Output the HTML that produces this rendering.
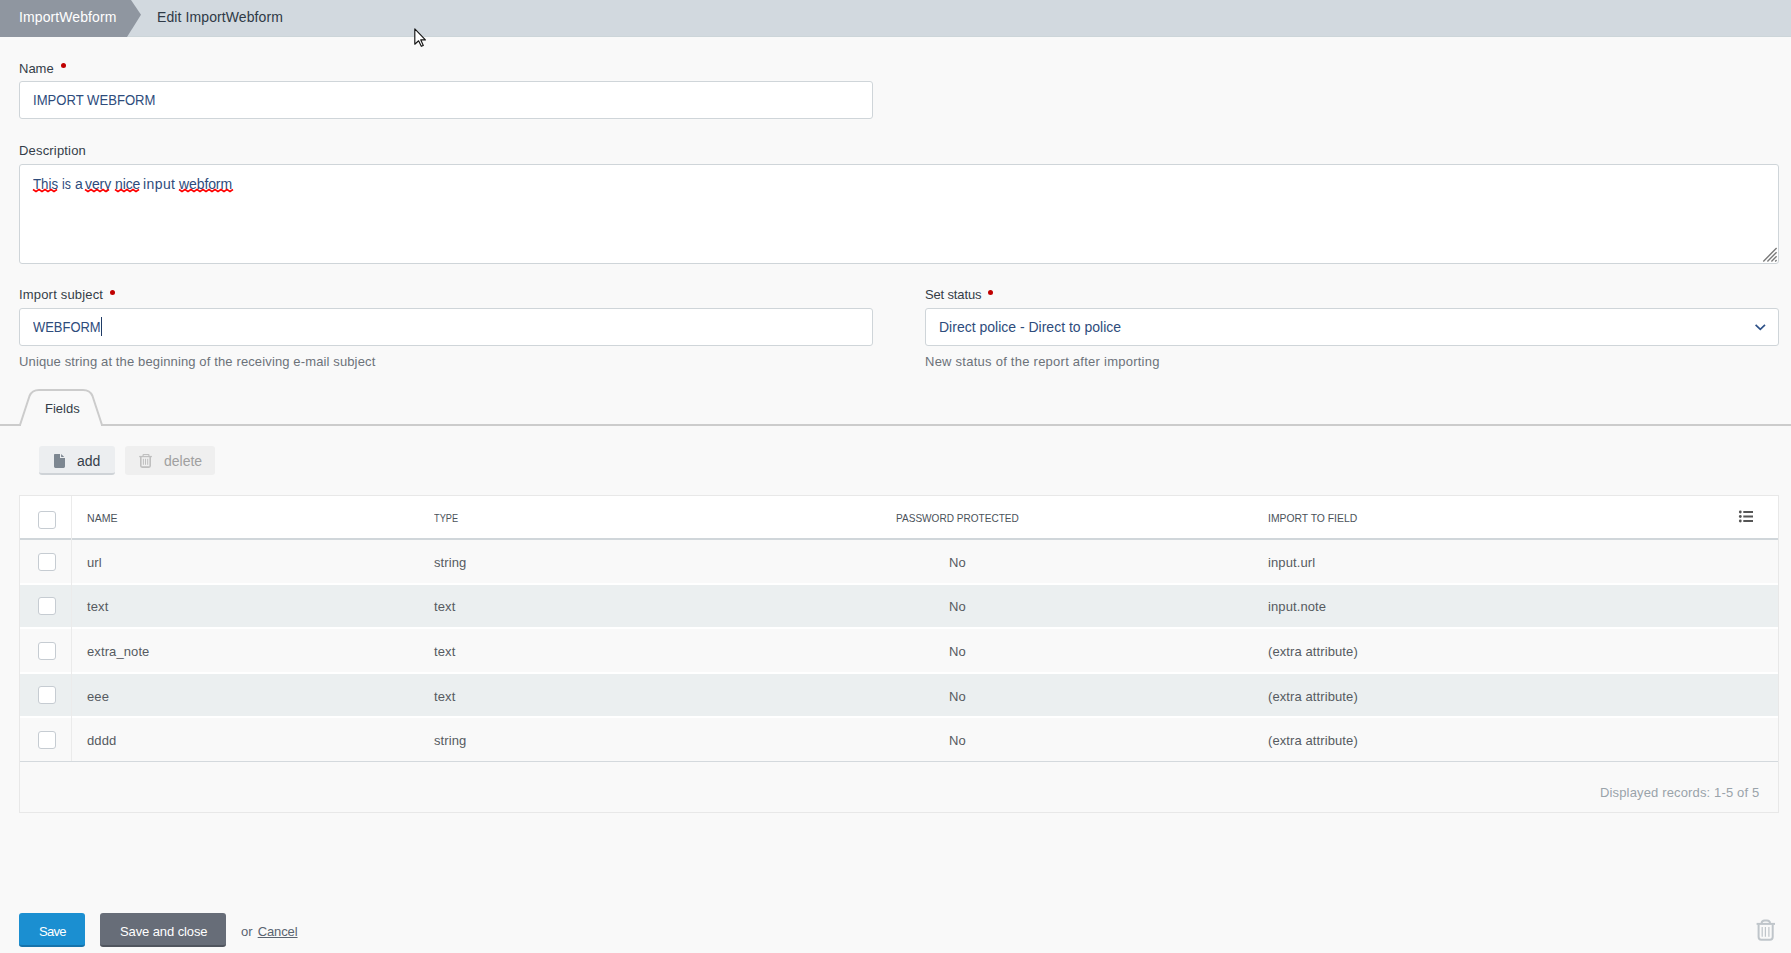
<!DOCTYPE html>
<html><head><meta charset="utf-8">
<style>
*{box-sizing:border-box;margin:0;padding:0}
html,body{width:1791px;height:953px;overflow:hidden;background:#f9f9f9;font-family:"Liberation Sans",sans-serif;}
.a{position:absolute;white-space:nowrap}
.t14{font-size:14px;line-height:16px}
.t13{font-size:13px;line-height:16px}
.t11{font-size:11px;line-height:14px}
.lbl{color:#343d48}
.dot{position:absolute;width:5px;height:5px;border-radius:50%;background:#c00000}
.inp{position:absolute;background:#fff;border:1px solid #cfd5d9;border-radius:3px}
.itxt{color:#2e4c7c}
.help{color:#6c7279}
.cb{position:absolute;width:18px;height:18px;background:#fff;border:1px solid #c6ccd2;border-radius:3px}
.cell{color:#565b61;letter-spacing:0.1px}
.hdr{color:#4b525a;text-transform:uppercase}
</style></head><body>

<!-- breadcrumb -->
<div class="a" style="left:0;top:0;width:1791px;height:37px;background:#d2d9df;border-bottom:1px solid #ccd5d9"></div>
<svg class="a" style="left:0;top:0" width="150" height="37"><polygon points="0,0 131,0 141,14.7 127,37 0,37" fill="#8f96a0"/></svg>
<div class="a t14" style="left:19px;top:9px;color:#fff;letter-spacing:0.1px">ImportWebform</div>
<div class="a t14" style="left:157px;top:9px;color:#2f3a46;letter-spacing:0.1px">Edit ImportWebform</div>

<!-- Name -->
<div class="a t13 lbl" style="left:19px;top:61px">Name</div>
<div class="dot" style="left:61px;top:63px"></div>
<div class="inp" style="left:19px;top:81px;width:854px;height:38px"></div>
<div class="a t14 itxt" style="left:33px;top:92px;transform:scaleX(0.935);transform-origin:0 0">IMPORT WEBFORM</div>

<!-- Description -->
<div class="a t13 lbl" style="left:19px;top:143px;letter-spacing:0.18px">Description</div>
<div class="inp" style="left:19px;top:164px;width:1760px;height:100px"></div>
<div class="a t14 itxt" style="left:33px;top:176px;transform:scaleX(0.95);transform-origin:0 0">This</div><div class="a t14 itxt" style="left:62px;top:176px;transform:scaleX(0.88);transform-origin:0 0">is</div><div class="a t14 itxt" style="left:75px;top:176px">a</div><div class="a t14 itxt" style="left:85px;top:176px;letter-spacing:-0.1px">very</div><div class="a t14 itxt" style="left:115px;top:176px;letter-spacing:-0.1px">nice</div><div class="a t14 itxt" style="left:143px;top:176px;letter-spacing:0.4px">input</div><div class="a t14 itxt" style="left:179px;top:176px;letter-spacing:-0.1px">webform</div>

<!-- Import subject -->
<div class="a t13 lbl" style="left:19px;top:287px;letter-spacing:0.18px">Import subject</div>
<div class="dot" style="left:110px;top:290px"></div>
<div class="inp" style="left:19px;top:308px;width:854px;height:38px"></div>
<div class="a t14 itxt" style="left:33px;top:319px;transform:scaleX(0.925);transform-origin:0 0">WEBFORM</div>
<div class="a t13 help" style="left:19px;top:354px;letter-spacing:0.13px">Unique string at the beginning of the receiving e-mail subject</div>

<!-- Set status -->
<div class="a t13 lbl" style="left:925px;top:287px;letter-spacing:-0.15px">Set status</div>
<div class="dot" style="left:988px;top:290px"></div>
<div class="inp" style="left:925px;top:308px;width:854px;height:38px"></div>
<div class="a t14 itxt" style="left:939px;top:319px">Direct police - Direct to police</div>
<div class="a t13 help" style="left:925px;top:354px;letter-spacing:0.25px">New status of the report after importing</div>

<!-- Tab -->
<div class="a" style="left:0;top:424px;width:21px;height:2px;background:#cccccc"></div><div class="a" style="left:101px;top:424px;width:1690px;height:2px;background:#cccccc"></div>
<svg class="a" style="left:15px;top:385px" width="95" height="42"><path d="M5,40 L14.5,11 Q17,5 24,5 L68,5 Q75,5 77.5,11 L87,40" fill="#f9f9f9" stroke="#cccccc" stroke-width="2"/></svg>
<div class="a t13 lbl" style="left:45px;top:401px">Fields</div>

<!-- Buttons add / delete -->
<div class="a" style="left:39px;top:446px;width:76px;height:29px;background:#eceef0;border-radius:3px;border-bottom:2px solid #cfd3d7"></div>
<svg class="a" style="left:54px;top:454px" width="12" height="14"><path d="M0.8,0 H6 V3.9 H11 V12.6 Q11,14 9.6,14 H1.4 Q0,14 0,12.6 V0.8 Q0,0 0.8,0 Z" fill="#7d8791"/><path d="M7.1,0 L10.2,2.9 L7.1,2.9 Z" fill="#7d8791"/></svg>
<div class="a t14" style="left:77px;top:453px;color:#36404a">add</div>
<div class="a" style="left:125px;top:446px;width:90px;height:29px;background:#efefef;border-radius:3px"></div>
<div class="a t14" style="left:164px;top:453px;color:#a0a0a0">delete</div>

<!-- Table -->
<div class="a" style="left:19px;top:495px;width:1760px;height:318px;border:1px solid #e8e8e8;background:#f9f9f9"></div>
<div class="a" style="left:20px;top:496px;width:1758px;height:42px;background:#fff"></div>
<div class="a" style="left:20px;top:538px;width:1758px;height:2px;background:#d0d6da"></div>
<div class="a" style="left:20px;top:585px;width:1758px;height:42px;background:#ebeff0"></div>
<div class="a" style="left:20px;top:674px;width:1758px;height:42px;background:#ebeff0"></div>
<div class="a" style="left:20px;top:583px;width:1758px;height:2px;background:#fff"></div>
<div class="a" style="left:20px;top:627px;width:1758px;height:2px;background:#fff"></div>
<div class="a" style="left:20px;top:672px;width:1758px;height:2px;background:#fff"></div>
<div class="a" style="left:20px;top:716px;width:1758px;height:2px;background:#fff"></div>
<div class="a" style="left:20px;top:761px;width:1758px;height:1px;background:#d4d9dd"></div>
<div class="a" style="left:71px;top:496px;width:1px;height:265px;background:#ebebeb"></div>

<div class="cb" style="left:38px;top:511px"></div>
<div class="a t11 hdr" style="left:87px;top:511px;transform:scaleX(0.96);transform-origin:0 0">Name</div>
<div class="a t11 hdr" style="left:434px;top:511px;transform:scaleX(0.84);transform-origin:0 0">Type</div>
<div class="a t11 hdr" style="left:896px;top:511px;transform:scaleX(0.915);transform-origin:0 0">Password protected</div>
<div class="a t11 hdr" style="left:1268px;top:511px;transform:scaleX(0.943);transform-origin:0 0">Import to field</div>

<div class="cb" style="left:38px;top:553px"></div>
<div class="cb" style="left:38px;top:597px"></div>
<div class="cb" style="left:38px;top:642px"></div>
<div class="cb" style="left:38px;top:686px"></div>
<div class="cb" style="left:38px;top:731px"></div>

<div class="a t13 cell" style="left:87px;top:555px">url</div>
<div class="a t13 cell" style="left:434px;top:555px">string</div>
<div class="a t13 cell" style="left:949px;top:555px">No</div>
<div class="a t13 cell" style="left:1268px;top:555px">input.url</div>

<div class="a t13 cell" style="left:87px;top:599px">text</div>
<div class="a t13 cell" style="left:434px;top:599px">text</div>
<div class="a t13 cell" style="left:949px;top:599px">No</div>
<div class="a t13 cell" style="left:1268px;top:599px">input.note</div>

<div class="a t13 cell" style="left:87px;top:644px">extra_note</div>
<div class="a t13 cell" style="left:434px;top:644px">text</div>
<div class="a t13 cell" style="left:949px;top:644px">No</div>
<div class="a t13 cell" style="left:1268px;top:644px">(extra attribute)</div>

<div class="a t13 cell" style="left:87px;top:689px">eee</div>
<div class="a t13 cell" style="left:434px;top:689px">text</div>
<div class="a t13 cell" style="left:949px;top:689px">No</div>
<div class="a t13 cell" style="left:1268px;top:689px">(extra attribute)</div>

<div class="a t13 cell" style="left:87px;top:733px">dddd</div>
<div class="a t13 cell" style="left:434px;top:733px">string</div>
<div class="a t13 cell" style="left:949px;top:733px">No</div>
<div class="a t13 cell" style="left:1268px;top:733px">(extra attribute)</div>

<div class="a t13" style="left:1600px;top:785px;color:#9aa3aa;letter-spacing:0.15px">Displayed records: 1-5 of 5</div>

<!-- bottom buttons -->
<div class="a" style="left:19px;top:913px;width:66px;height:34px;background:#1b8fd1;border-radius:3px;border-bottom:2px solid #1673ab"></div>
<div class="a t13" style="left:39px;top:924px;color:#fff;letter-spacing:-0.75px">Save</div>
<div class="a" style="left:100px;top:913px;width:126px;height:34px;background:#676d78;border-radius:3px;border-bottom:2px solid #50555e"></div>
<div class="a t13" style="left:120px;top:924px;color:#fff;letter-spacing:-0.1px">Save and close</div>
<div class="a t13" style="left:241px;top:924px;color:#5a6470">or <span style="text-decoration:underline;margin-left:1.5px;letter-spacing:-0.1px">Cancel</span></div>


<!-- textarea resize handle -->
<svg class="a" style="left:1760px;top:246px" width="18" height="18"><path d="M3.3,15.4 L16.6,2.1 M7.4,15.4 L16.6,6.2 M11.4,15.4 L16.6,10.2 M15.2,15.4 L16.6,14" stroke="#7a7a7a" stroke-width="1.4"/></svg>
<!-- spellcheck squiggles -->
<svg class="a" style="left:0;top:0" width="260" height="200"><path d="M33,189.5 L36,191.5 L39,189.5 L42,191.5 L45,189.5 L48,191.5 L51,189.5 L54,191.5 L57,189.5 M85,189.5 L88,191.5 L91,189.5 L94,191.5 L97,189.5 L100,191.5 L103,189.5 L106,191.5 L109,189.5 M115,189.5 L118,191.5 L121,189.5 L124,191.5 L127,189.5 L130,191.5 L133,189.5 L136,191.5 L139,189.5 M179,189.5 L182,191.5 L185,189.5 L188,191.5 L191,189.5 L194,191.5 L197,189.5 L200,191.5 L203,189.5 L206,191.5 L209,189.5 L212,191.5 L215,189.5 L218,191.5 L221,189.5 L224,191.5 L227,189.5 L230,191.5 L233,189.5" stroke="#ff0000" stroke-width="1.6" fill="none"/></svg>
<!-- caret -->
<div class="a" style="left:101px;top:317px;width:1px;height:19px;background:#1f3b66"></div>
<!-- chevron -->
<svg class="a" style="left:1752px;top:320px" width="16" height="12"><path d="M3.6,4.9 L8.3,9.3 L13,4.9" stroke="#2d5188" stroke-width="1.7" fill="none"/></svg>
<!-- delete trash -->
<svg class="a" style="left:136px;top:450px" width="20" height="20"><path d="M7.1,6.3 V5 Q7.1,4.5 7.7,4.5 H12.3 Q12.9,4.5 12.9,5 V6.3" stroke="#bfbfbf" stroke-width="1.2" fill="none"/><rect x="3.2" y="5.9" width="12.7" height="1.3" fill="#bfbfbf"/><path d="M4.8,7 V15.8 Q4.8,17.1 6.1,17.1 H13 Q14.2,17.1 14.2,15.8 V7" stroke="#bfbfbf" stroke-width="1.6" fill="none"/><path d="M7.4,8.8 V14.8 M9.5,8.8 V14.8 M11.7,8.8 V14.8" stroke="#bfbfbf" stroke-width="1"/></svg>
<!-- list icon -->
<svg class="a" style="left:1737px;top:508px" width="20" height="16"><circle cx="3.3" cy="4" r="1.4" fill="#555"/><circle cx="3.3" cy="8.5" r="1.4" fill="#555"/><circle cx="3.3" cy="13" r="1.4" fill="#555"/><path d="M6.3,4 H16 M6.3,8.5 H16 M6.3,13 H16" stroke="#555" stroke-width="2.2"/></svg>
<!-- bottom right trash -->
<svg class="a" style="left:1754px;top:916px" width="24" height="28"><path d="M7.6,7 Q7.8,4.4 10.6,4.4 H13 Q15.8,4.4 16,7" stroke="#bfc5ca" stroke-width="2" fill="none"/><rect x="2.6" y="6.9" width="18.4" height="2" fill="#bfc5ca"/><path d="M4.6,8.5 V21 Q4.6,23.7 7.3,23.7 H16 Q18.7,23.7 18.7,21 V8.5" stroke="#bfc5ca" stroke-width="2" fill="none"/><path d="M8.2,10.9 V20.7 M11.4,10.9 V20.7 M14.9,10.9 V20.7" stroke="#bfc5ca" stroke-width="1.2"/></svg>
<!-- cursor -->
<svg class="a" style="left:412px;top:26px" width="18" height="24"><path d="M2.8,2.8 L2.8,18.2 L6.6,14.8 L9.3,20.3 L11.3,19.5 L8.8,13.9 L13.4,13.9 Z" fill="#fff" stroke="#151515" stroke-width="1.15" stroke-linejoin="round"/></svg>

</body></html>
